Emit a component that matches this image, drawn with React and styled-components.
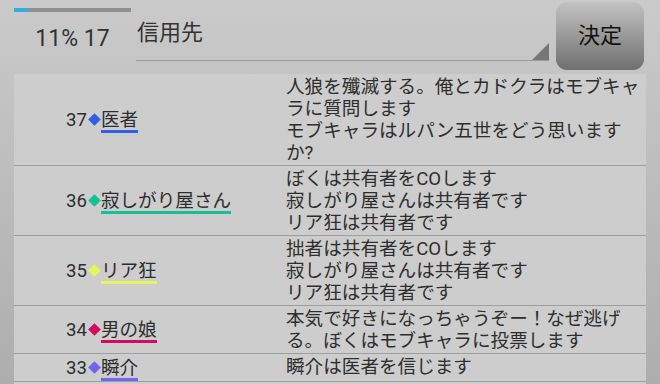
import styled, { createGlobalStyle } from 'styled-components'

const GlobalStyle = createGlobalStyle`
  html, body {
    margin: 0;
    padding: 0;
  }
  body {
    font-family: Roboto, "Noto Sans CJK JP", sans-serif;
    color: #333;
  }
`

const Page = styled.div`
  min-height: 100vh;
  box-sizing: border-box;
  padding: 0 14px;
  background: linear-gradient(#cacaca, #acacac);
  overflow: hidden;
`

const Header = styled.div`
  display: flex;
  height: 74px;
`

const Status = styled.div`
  width: 117px;
  flex: none;
  padding-top: 8px;
`

const Progress = styled.div`
  height: 4px;
  background: #8f8f8f;
`

const ProgressFill = styled.div`
  height: 100%;
  background: #3aa9e0;
`

const StatusText = styled.div`
  margin-top: 12px;
  text-align: center;
  font-size: 23px;
  line-height: 30px;
  color: #333;
`

const Spinner = styled.div`
  position: relative;
  flex: 1;
  margin-left: 5px;
  height: 61px;
  box-sizing: border-box;
  padding: 18px 0 0 1px;
  border-bottom: 1px solid #9a9a9a;
  font-size: 22px;
  line-height: 30px;
  color: #333;
`

const Corner = styled.div`
  position: absolute;
  right: 0;
  bottom: 0;
  width: 0;
  height: 0;
  border-left: 17px solid transparent;
  border-bottom: 17px solid #767676;
`

const Button = styled.button`
  flex: none;
  width: 88px;
  height: 68px;
  margin: 2px 2px 0 7px;
  border: none;
  border-radius: 11px;
  background: linear-gradient(#c2c2c2, #6f6f6f);
  font-family: Roboto, "Noto Sans CJK JP", sans-serif;
  font-size: 22px;
  color: #111;
  padding: 0 0 6px;
`

const Table = styled.div`
  background: #cdcdcd;
  padding-bottom: 20px;
`

const Row = styled.div`
  display: flex;
  border-bottom: 1px solid #9e9e9e;
  font-size: 18.6px;
  line-height: 22px;
  color: #2e2e2e;
`

const NameCell = styled.div`
  width: 217px;
  flex: none;
  padding-left: 52px;
  display: flex;
  align-items: center;
`

const Num = styled.span`
  font-size: 18.6px;
`

const Diamond = styled.span`
  display: inline-block;
  width: 9px;
  height: 9px;
  margin: 0 2px 0 3px;
  transform: rotate(45deg);
  background: ${p => p.$color};
`

const Name = styled.span`
  display: inline-block;
  line-height: 20px;
  padding-top: 4px;
  border-bottom: 3px solid ${p => p.$color};
`

const Message = styled.div`
  flex: 1;
  padding: 2px 0 1px 3px;
  white-space: pre-line;
`

const rows = [
  {
    no: 37,
    name: '医者',
    color: '#2f5fe6',
    text: '人狼を殲滅する。俺とカドクラはモブキャラに質問します\nモブキャラはルパン五世をどう思いますか?',
  },
  {
    no: 36,
    name: '寂しがり屋さん',
    color: '#12c294',
    text: 'ぼくは共有者をCOします\n寂しがり屋さんは共有者です\nリア狂は共有者です',
  },
  {
    no: 35,
    name: 'リア狂',
    color: '#e6f55a',
    text: '拙者は共有者をCOします\n寂しがり屋さんは共有者です\nリア狂は共有者です',
  },
  {
    no: 34,
    name: '男の娘',
    color: '#d20c5e',
    text: '本気で好きになっちゃうぞー！なぜ逃げる。ぼくはモブキャラに投票します',
  },
  {
    no: 33,
    name: '瞬介',
    color: '#7462f2',
    text: '瞬介は医者を信じます',
  },
]

export default function App() {
  const percent = 11
  return (
    <Page>
      <GlobalStyle />
      <Header>
        <Status>
          <Progress>
            <ProgressFill style={{ width: `${percent + 1}%` }} />
          </Progress>
          <StatusText>{percent}% 17</StatusText>
        </Status>
        <Spinner>
          信用先
          <Corner />
        </Spinner>
        <Button>決定</Button>
      </Header>
      <Table>
        {rows.map(r => (
          <Row key={r.no}>
            <NameCell>
              <Num>{r.no}</Num>
              <Diamond $color={r.color} />
              <Name $color={r.color}>{r.name}</Name>
            </NameCell>
            <Message>{r.text}</Message>
          </Row>
        ))}
      </Table>
    </Page>
  )
}
